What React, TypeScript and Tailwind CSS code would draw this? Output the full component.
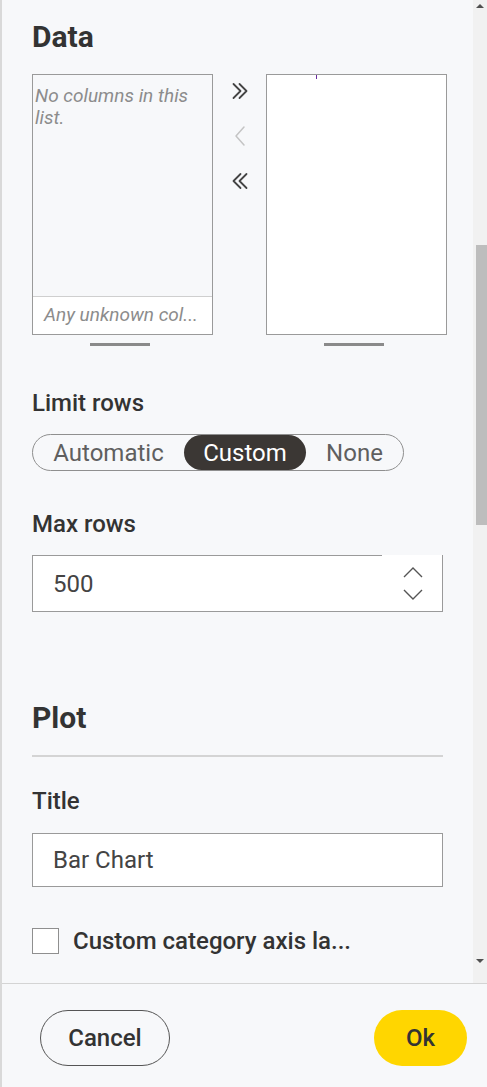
import React from 'react';

const font = { fontFamily: 'Roboto, "Noto Sans", sans-serif' };

function DoubleChevron({ dir, color }: { dir: 'left' | 'right'; color: string }) {
  const d =
    dir === 'right'
      ? 'M3 3 L10 10 L3 17 M9 3 L16 10 L9 17'
      : 'M10 3 L3 10 L10 17 M16 3 L9 10 L16 17';
  return (
    <svg width="20" height="20" viewBox="0 0 19 20" fill="none">
      <path d={d} stroke={color} strokeWidth="1.8" strokeLinecap="round" strokeLinejoin="round" />
    </svg>
  );
}

function SingleChevron({ color }: { color: string }) {
  return (
    <svg width="14" height="22" viewBox="0 0 14 22" fill="none">
      <path d="M11 2 L3 11 L11 20" stroke={color} strokeWidth="1.5" strokeLinecap="round" strokeLinejoin="round" />
    </svg>
  );
}

function TransferList() {
  return (
    <div className="mt-[21px] flex">
      {/* available columns */}
      <div className="flex flex-col">
        <div className="w-[181px] h-[261px] border border-[#9a9a9a] bg-[#f7f8fa] flex flex-col">
          <div className="flex-1 pl-[2px] pt-[10px] text-[19px] leading-[22px] italic text-[#8c8c8c]">
            No columns in this
            <br />
            list.
          </div>
          <div className="h-[38px] border-t border-[#cfcfcf] bg-white pl-[11px] flex items-center text-[19px] italic text-[#8c8c8c] whitespace-nowrap overflow-hidden">
            Any unknown col...
          </div>
        </div>
        <div className="mt-[8px] ml-[58px] w-[60px] h-[3px] bg-[#8a8a8a]" />
      </div>

      {/* buttons */}
      <div className="w-[53px] flex flex-col items-center pt-[7px]">
        <DoubleChevron dir="right" color="#444" />
        <div className="mt-[24px]">
          <SingleChevron color="#c4c4c4" />
        </div>
        <div className="mt-[24px]">
          <DoubleChevron dir="left" color="#444" />
        </div>
      </div>

      {/* selected columns */}
      <div className="flex flex-col">
        <div className="relative w-[181px] h-[261px] border border-[#9a9a9a] bg-white">
          <div className="absolute left-[49px] top-0 w-[1px] h-[4px] bg-[#6a2ca0]" />
        </div>
        <div className="mt-[8px] ml-[58px] w-[60px] h-[3px] bg-[#8a8a8a]" />
      </div>
    </div>
  );
}

function LimitRows() {
  return (
    <div className="mt-[17px] w-[372px] h-[37px] rounded-full border border-[#8f8f8f] flex items-stretch text-[24px] text-[#5f5f5f]">
      <div className="w-[151px] flex items-center justify-center">Automatic</div>
      <div className="w-[122px] rounded-full bg-[#3b3734] text-white flex items-center justify-center">Custom</div>
      <div className="w-[97px] flex items-center justify-center">None</div>
    </div>
  );
}

function MaxRowsInput() {
  return (
    <div className="mt-[17px] w-[411px] h-[57px] flex border-l border-r border-b border-[#9a9a9a] bg-white">
      <div className="flex-1 border-t border-[#9a9a9a] flex items-center pl-[20px] text-[24px] text-[#444]">500</div>
      <div className="w-[60px] border-t border-white flex flex-col items-center justify-center gap-[11px] pl-[2px]">
        <svg width="20" height="11" viewBox="0 0 20 11" fill="none">
          <path d="M1 10 L10 1 L19 10" stroke="#555" strokeWidth="1.4" />
        </svg>
        <svg width="20" height="11" viewBox="0 0 20 11" fill="none">
          <path d="M1 1 L10 10 L19 1" stroke="#555" strokeWidth="1.4" />
        </svg>
      </div>
    </div>
  );
}

function ScrollBar() {
  return (
    <div className="w-[14px] bg-[#f1f1f1] flex flex-col items-center">
      <div className="h-[10px] flex items-center justify-center pt-[1px]">
        <div className="w-0 h-0 border-l-[4px] border-r-[4px] border-b-[4px] border-l-transparent border-r-transparent border-b-[#505050]" />
      </div>
      <div className="flex-1 w-full flex flex-col">
        <div className="mt-[235px] ml-[3px] w-[11px] h-[280px] bg-[#bdbdbd]" />
      </div>
      <div className="h-[26px] flex items-start justify-center pt-[2px]">
        <div className="w-0 h-0 border-l-[4px] border-r-[4px] border-t-[4px] border-l-transparent border-r-transparent border-t-[#505050]" />
      </div>
    </div>
  );
}

export default function App() {
  return (
    <div
      style={font}
      className="w-[487px] h-[1087px] flex flex-col bg-[#f7f8fa] border-l-2 border-[#d9d9d9] overflow-hidden"
    >
      <div className="h-[983px] flex">
        <div className="flex-1 pl-[30px] overflow-hidden flex flex-col">
          <h2 className="pt-[21px] text-[30px] leading-[32px] font-bold text-[#333]">Data</h2>
          <TransferList />

          <div className="mt-[43px] text-[24px] leading-[28px] font-medium text-[#333]">Limit rows</div>
          <LimitRows />

          <div className="mt-[39px] text-[24px] leading-[28px] font-medium text-[#333]">Max rows</div>
          <MaxRowsInput />

          <h2 className="mt-[90px] text-[30px] leading-[32px] font-bold text-[#333]">Plot</h2>
          <div className="mt-[21px] w-[411px] h-[2px] bg-[#d4d4d4]" />

          <div className="mt-[30px] text-[24px] leading-[28px] font-medium text-[#333]">Title</div>
          <div className="mt-[18px] w-[411px] h-[54px] border border-[#9a9a9a] bg-white flex items-center pl-[20px] text-[24px] text-[#444]">
            Bar Chart
          </div>

          <div className="mt-[40px] h-[28px] flex items-center">
            <div className="w-[27px] h-[26px] border border-[#8f8f8f] bg-white" />
            <span className="ml-[14px] text-[24px] font-medium text-[#333] whitespace-nowrap">Custom category axis la...</span>
          </div>
        </div>
        <ScrollBar />
      </div>

      <div className="flex-1 border-t border-[#d4d4d4] flex justify-between items-start pt-[26px] pl-[38px] pr-[20px]">
        <button className="w-[130px] h-[56px] rounded-full border-[1.5px] border-[#555] text-[24px] font-medium text-[#333]">
          Cancel
        </button>
        <button className="w-[93px] h-[56px] rounded-full bg-[#ffd600] text-[24px] font-medium text-[#333]">
          Ok
        </button>
      </div>
    </div>
  );
}
